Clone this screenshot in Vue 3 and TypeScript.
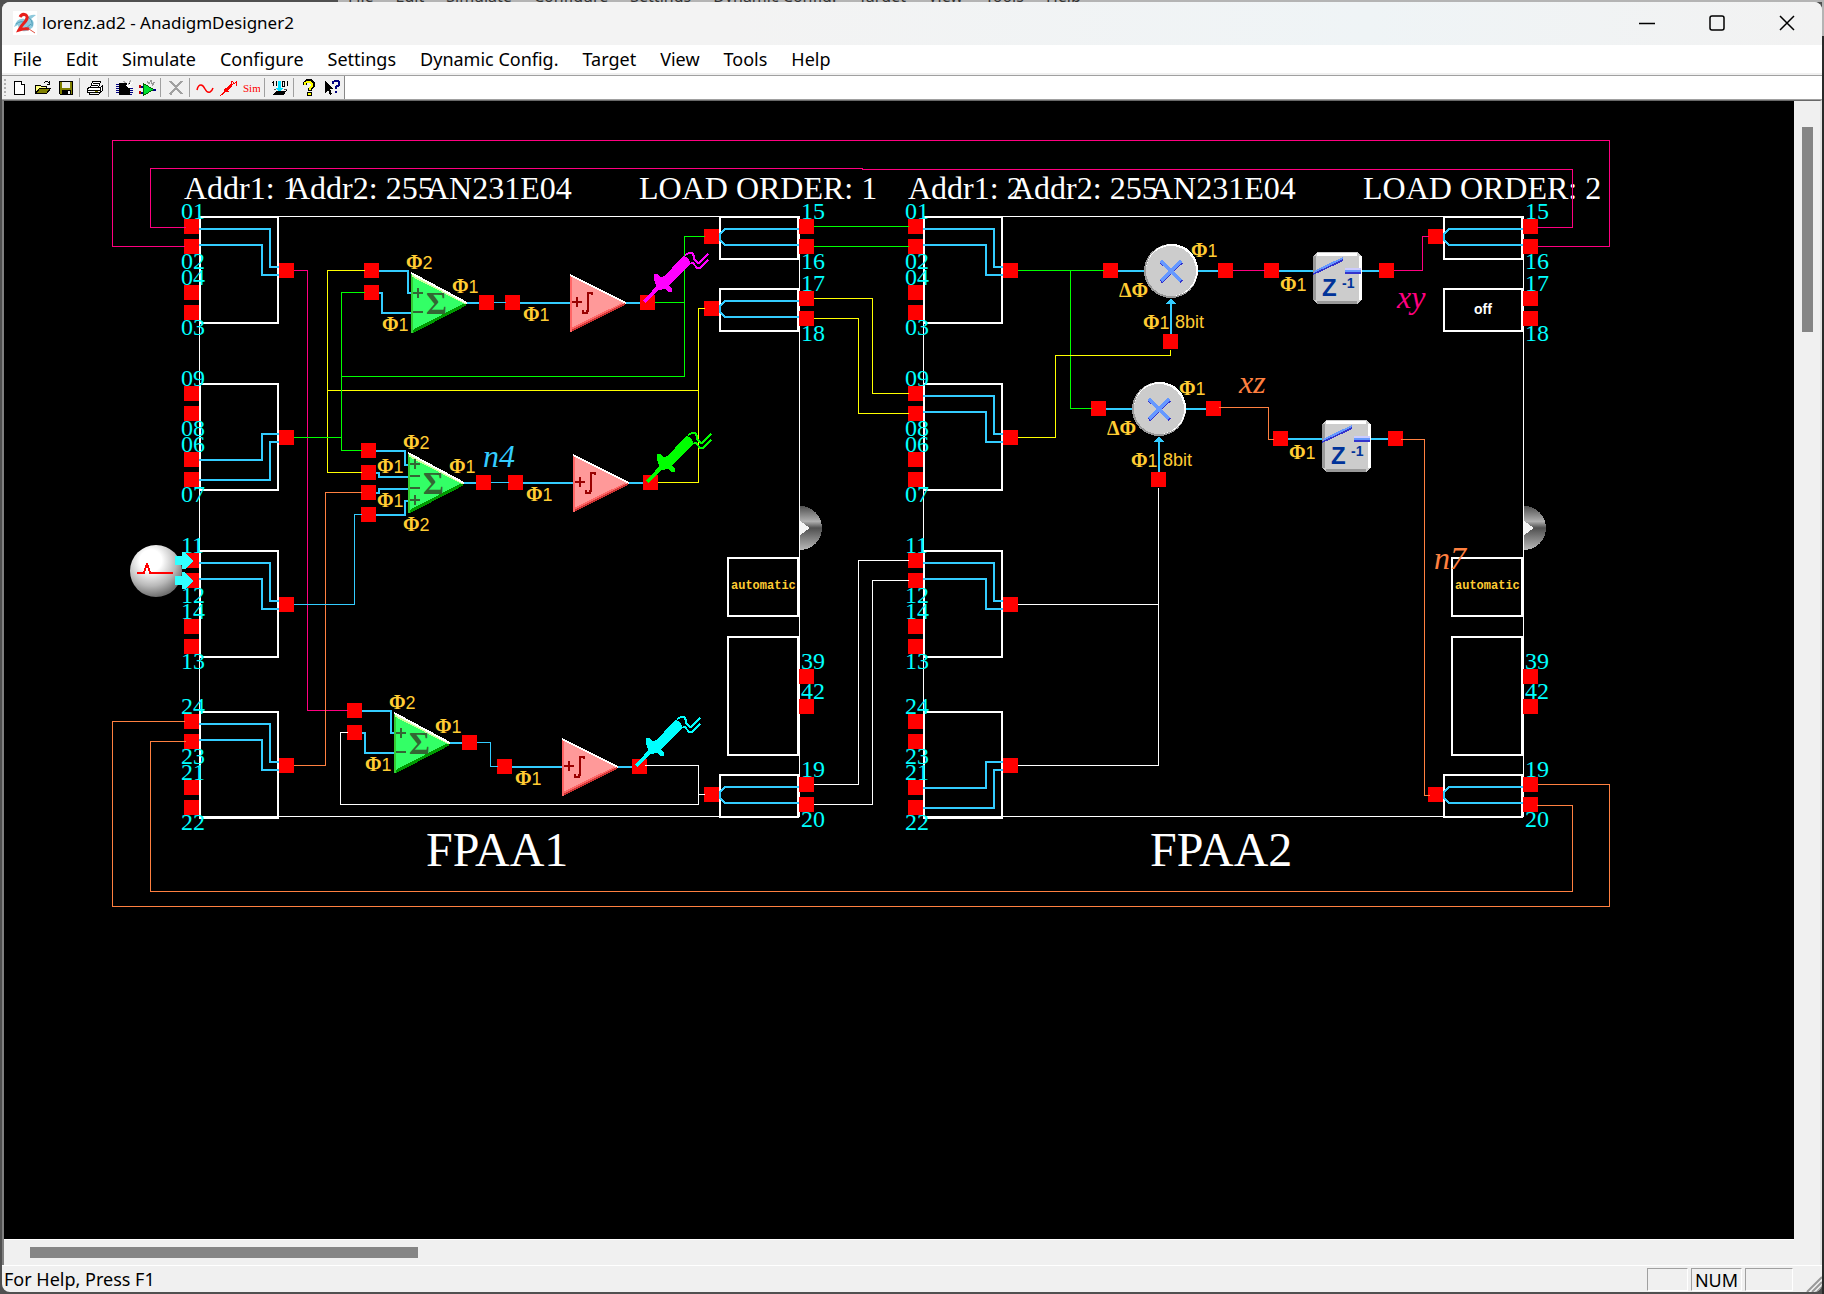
<script setup lang="ts">
type Point = { x: number; y: number }
type Label = Point & { text: string }
type Wire = { color: string; points: string }

const menus: string[] = ['File', 'Edit', 'Simulate', 'Configure', 'Settings', 'Dynamic Config.', 'Target', 'View', 'Tools', 'Help']

const toolGroups: string[][] = [
  ['New', 'Open', 'Save'],
  ['Print'],
  ['Insert chip', 'Insert CAM'],
  ['Delete'],
  ['Signal generator', 'Oscilloscope probe', 'Simulate'],
  ['Download'],
  ['About', 'Context help'],
]

const MAGENTA = '#ff0080'
const YELLOW = '#ffff00'
const GREEN = '#00ff00'
const ORANGE = '#ff8040'
const SKY = '#33ccff'
const WHITE = '#ffffff'

/* Chip geometry: both devices share one layout, shifted sideways. */
const chips = [
  { name: 'FPAA1', dx: 0, addr: '1', order: '1' },
  { name: 'FPAA2', dx: 724, addr: '2', order: '2' },
]

const inputCells = [
  { dy: 0, pins: ['01', '02', '04', '03'] },
  { dy: 167, pins: ['09', '08', '06', '07'] },
  { dy: 334, pins: ['11', '12', '14', '13'] },
  { dy: 495, pins: ['24', '23', '21', '22'] },
]
const pinTops: number[] = [219, 239, 285, 305]
const pinBaselines: number[] = [219, 269, 285, 335]

const outputCells = [
  { dy: 0, pins: ['15', '16'] },
  { dy: 72, pins: ['17', '18'] },
  { dy: 558, pins: ['19', '20'] },
]

/* Which pin pair each input cell is switched to. */
const lowerPair = (chip: number, cell: number): boolean =>
  (chip === 0 && cell === 1) || (chip === 1 && cell === 3)
const cellOff = (chip: number, cell: number): boolean => chip === 1 && cell === 1

const upperRoute = ['199,229 270,229 270,267 279,267', '199,245 262,245 262,275 279,275']
const lowerRoute = ['199,293 262,293 262,267 279,267', '199,313 270,313 270,275 279,275']

const summers: Point[] = [{ x: 0, y: 0 }, { x: -17, y: 440 }]
const integrators: (Point & { probe: string })[] = [
  { x: 0, y: 0, probe: '#ff00ff' },
  { x: 3, y: 180, probe: '#00ff00' },
  { x: -8, y: 464, probe: '#00ffff' },
]
const multipliers: Point[] = [{ x: 0, y: 0 }, { x: -12, y: 138 }]
const holds: Point[] = [{ x: 0, y: 0 }, { x: 9, y: 168 }]
const quadPins: number[] = [443, 465, 485, 507]
const quadPhases: Label[] = [
  { x: 403, y: 449, text: '2' },
  { x: 449, y: 473, text: '1' },
  { x: 377, y: 473, text: '1' },
  { x: 377, y: 507, text: '1' },
  { x: 403, y: 531, text: '2' },
]

const wires: Wire[] = [
  { color: MAGENTA, points: '184,246 112,246 112,140 1609,140 1609,246 1537,246' },
  { color: MAGENTA, points: '185,227 150,227 150,168 862,168 862,169 1572,169 1572,227 1536,227' },
  { color: MAGENTA, points: '293,270 307,270 307,710 347,710' },
  { color: YELLOW, points: '364,270 327,270 327,472 361,472' },
  { color: YELLOW, points: '327,390 698,390' },
  { color: YELLOW, points: '704,308 698,308 698,482 657,482' },
  { color: GREEN, points: '364,292 341,292 341,450 361,450' },
  { color: GREEN, points: '293,437 341,437' },
  { color: GREEN, points: '341,376 684,376 684,236 704,236' },
  { color: GREEN, points: '654,302 684,302' },
  { color: GREEN, points: '813,226 908,226' },
  { color: GREEN, points: '813,246 908,246' },
  { color: YELLOW, points: '813,298 872,298 872,393 908,393' },
  { color: YELLOW, points: '813,318 858,318 858,413 908,413' },
  { color: ORANGE, points: '361,492 325,492 325,765 293,765' },
  { color: SKY, points: '361,514 354,514 354,604 293,604' },
  { color: SKY, points: '493,302 505,302' },
  { color: SKY, points: '490,482 508,482' },
  { color: SKY, points: '476,742 490,742 490,766 497,766' },
  { color: WHITE, points: '347,732 340,732 340,804 698,804 698,765 644,765' },
  { color: WHITE, points: '698,794 704,794' },
  { color: WHITE, points: '813,784 858,784 858,560 908,560' },
  { color: WHITE, points: '813,804 872,804 872,580 908,580' },
  { color: ORANGE, points: '184,721 112,721 112,906 1609,906 1609,784 1537,784' },
  { color: ORANGE, points: '185,741 150,741 150,891 1572,891 1572,805 1536,805' },
  { color: GREEN, points: '1017,270 1103,270' },
  { color: GREEN, points: '1070,270 1070,408 1091,408' },
  { color: YELLOW, points: '1017,437 1055,437 1055,355 1170,355 1170,349' },
  { color: WHITE, points: '1017,604 1158,604' },
  { color: WHITE, points: '1158,487 1158,765 1017,765' },
  { color: MAGENTA, points: '1232,270 1264,270' },
  { color: MAGENTA, points: '1393,270 1422,270 1422,236 1428,236' },
  { color: ORANGE, points: '1218,407 1268,407 1268,439 1273,439' },
  { color: ORANGE, points: '1400,439 1424,439 1424,795 1429,795' },
]

const nets: (Label & { color: string })[] = [
  { text: 'n4', x: 483, y: 467, color: SKY },
  { text: 'xz', x: 1239, y: 393, color: ORANGE },
  { text: 'xy', x: 1397, y: 308, color: MAGENTA },
  { text: 'n7', x: 1434, y: 569, color: ORANGE },
]

const move = (p: Point): string => `translate(${p.x} ${p.y})`
</script>

<template>
  <div class="desktop">
    <div class="behind" aria-hidden="true">
      <span v-for="m in menus" :key="m">{{ m }}</span>
    </div>
    <main class="window">
      <header class="titlebar">
        <svg class="logo" viewBox="0 0 24 24" aria-hidden="true">
          <rect width="24" height="24" fill="#fff" />
          <path d="M1 16Q4 6 12 8Q17 3 23 4L18 8Q22 10 20 16Q15 21 9 20L12 16L6 18L5 14Z" fill="#8fc9dc" />
          <path d="M3 13Q8 9 13 12M15 6Q20 9 19 15M7 19Q14 18 18 13" fill="none" stroke="#4a9cb8" stroke-width="1" />
          <path d="M7 6Q9 2 13 4Q16 7 11 12Q8 15 6 19Q12 17 16 18" fill="none" stroke="#e8201c" stroke-width="3" />
          <path d="M16 18L22 22" stroke="#e05040" />
        </svg>
        <h1>lorenz.ad2 - AnadigmDesigner2</h1>
        <div class="window-buttons">
          <button type="button" aria-label="Minimize">
            <svg viewBox="0 0 16 16"><path d="M0 8.500H16" /></svg>
          </button>
          <button type="button" aria-label="Maximize">
            <svg viewBox="0 0 16 16"><rect x="1" y="1" width="14" height="14" rx="2" /></svg>
          </button>
          <button type="button" aria-label="Close">
            <svg viewBox="0 0 16 16"><path d="M1 1L15 15M15 1L1 15" /></svg>
          </button>
        </div>
      </header>

      <nav class="menubar">
        <button v-for="m in menus" :key="m" type="button">{{ m }}</button>
      </nav>

      <div class="toolbar-row">
        <div class="toolbar" role="toolbar" aria-label="Standard">
          <span class="grip"></span>
          <div v-for="(group, g) in toolGroups" :key="g" class="group">
            <button v-for="tool in group" :key="tool" type="button" :aria-label="tool">
              <svg viewBox="0 0 18 18" shape-rendering="crispEdges">
                <g v-if="tool === 'New'" fill="#fff" stroke="#000">
                  <path d="M3.500 2.500H10.500L13.500 5.500V15.500H3.500Z" />
                  <path d="M10.500 2.500V5.500H13.500" />
                </g>
                <g v-else-if="tool === 'Open'">
                  <path d="M1.500 14.500V6.500H6.500L7.500 7.500H12.500V9.500" fill="#ffff80" stroke="#000" />
                  <path d="M1.500 14.500L5.500 9.500H16.500L12.500 14.500Z" fill="#808000" stroke="#000" />
                  <path d="M9.500 4.500L11.500 2.500H13.500L15.500 4.500V2M15.500 5.500H12.500" fill="none" stroke="#000" />
                </g>
                <g v-else-if="tool === 'Save'">
                  <path d="M2.500 2.500H15.500V15.500H3.500L2.500 14.500Z" fill="#808000" stroke="#000" />
                  <rect x="5" y="3" width="8" height="6" fill="#f0f0f0" />
                  <rect x="5" y="11" width="9" height="5" fill="#000" />
                  <rect x="11" y="12" width="2" height="3" fill="#f0f0f0" />
                </g>
                <g v-else-if="tool === 'Print'" stroke="#000" fill="#fff">
                  <path d="M6.500 2.500H14.500L12.500 8.500H4.500ZM7 4.500H13M6 6.500H12" />
                  <path d="M2.500 8.500H14.500V13.500H1.500V10.500ZM14.500 8.500L16.500 6.500V11.500L14.500 13.500" />
                  <path d="M3.500 13.500V15.500H12.500L14.500 13.500M2 11.500H14" fill="none" />
                  <path d="M9 12.500H12" stroke="#808000" />
                </g>
                <g v-else-if="tool === 'Insert chip'">
                  <rect x="4" y="4" width="11" height="12" fill="#000" />
                  <path d="M1 5.500H4M1 9.500H4M1 13.500H4M15 9.500H18M15 13.500H18M1 7.500H4M1 11.500H4M15 11.500H18M15 15.500H17" stroke="#000080" />
                  <path d="M9 5L11 7L14 1L14 5L18 3L15 7L17 9H13Z" fill="#fff" />
                  <path d="M8 2L11 4M16 1L13 6" stroke="#aaa" />
                </g>
                <g v-else-if="tool === 'Insert CAM'">
                  <path d="M5.500 4.500L15.500 10.500L5.500 16.500Z" fill="#00e030" stroke="#006600" />
                  <path d="M1 7.500H5M1 13.500H5M15 10.500H18" stroke="#000080" stroke-width="2" />
                  <rect x="1" y="6" width="2" height="3" fill="#c00" />
                  <rect x="1" y="12" width="2" height="3" fill="#c00" />
                  <path d="M9 2L11 5L13 1V5L17 3L14 7" fill="none" stroke="#999" />
                </g>
                <path v-else-if="tool === 'Delete'" d="M3 2L15 15M15 2L3 15M3 15H5" fill="none" stroke="#a0a0a0" stroke-width="2" />
                <path v-else-if="tool === 'Signal generator'" d="M1 11Q2 6 5 6Q7 6 9 10Q11 14 14 13Q16 12 17 9" fill="none" stroke="#f00" stroke-width="1.500" shape-rendering="auto" />
                <g v-else-if="tool === 'Oscilloscope probe'">
                  <path d="M5 13L5 10L7 9L12 4L14 5L13 7L9 11L10 13L8 13Z" fill="#f00" />
                  <path d="M7 12L1 17M12 4Q13 1 14 3L15 5L17 3V7" fill="none" stroke="#f00" />
                </g>
                <text v-else-if="tool === 'Simulate'" class="sim" x="1" y="13">Sim</text>
                <g v-else-if="tool === 'Download'">
                  <path d="M2.500 2V7M5.500 2V7M13.500 2H11.500V7H13.500ZM16.500 2V7M1 3.500H3" fill="none" stroke="#000" />
                  <path d="M7 2H10V9H12L8 13L4 9H7Z" fill="#00e0ff" />
                  <path d="M2 16L5 12H14L16 11L13 16Z" fill="#000" />
                  <path d="M3 10.500H5M13 10.500H16" stroke="#555" />
                </g>
                <g v-else-if="tool === 'About'">
                  <path d="M5 6V4L7 2H11L13 4V7L10 10V12" fill="none" stroke="#000" stroke-width="4" />
                  <path d="M5 6V4L7 3H10L12 5V7L10 9V11" fill="none" stroke="#ffff00" stroke-width="2" />
                  <rect x="7" y="13" width="5" height="4" fill="#000" />
                  <rect x="8" y="14" width="3" height="2" fill="#ffff00" />
                </g>
                <g v-else>
                  <path d="M2 2V14L5 11L7 16L9 15L7 10H11Z" fill="#000" />
                  <path d="M10 5V3L12 2H15L16 3V6L13 8V10M13 12V14" fill="none" stroke="#000080" stroke-width="2" />
                </g>
              </svg>
            </button>
          </div>
        </div>
      </div>

      <section class="workspace">
        <div class="canvas">
          <svg class="diagram" role="img" aria-label="Lorenz circuit schematic" shape-rendering="crispEdges">
            <defs>
              <radialGradient id="ball" cx="0.400" cy="0.300" r="0.700">
                <stop offset="0.300" stop-color="#ffffff" />
                <stop offset="0.700" stop-color="#b8b8b8" />
                <stop offset="1" stop-color="#707070" />
              </radialGradient>
              <linearGradient id="knob" x1="0" y1="0" x2="0" y2="1">
                <stop offset="0" stop-color="#505050" />
                <stop offset="0.350" stop-color="#b0b0b0" />
                <stop offset="0.500" stop-color="#505050" />
                <stop offset="1" stop-color="#b8b8b8" />
              </linearGradient>
            </defs>
            <g transform="translate(-4 -101)">
              <!-- devices -->
              <g v-for="(chip, c) in chips" :key="chip.name" :transform="`translate(${chip.dx} 0)`">
                <path d="M800 506A22 22 0 0 1 800 550Z" fill="url(#knob)" />
                <path d="M800 521L810 528L800 535Z" fill="#f4f4f4" />
                <g class="heading">
                  <text x="184" y="199">Addr1: {{ chip.addr }}</text>
                  <text x="287" y="199">Addr2: 255</text>
                  <text x="426" y="199">AN231E04</text>
                  <text x="639" y="199">LOAD ORDER: {{ chip.order }}</text>
                </g>
                <text class="chip-name" x="426" y="866">{{ chip.name }}</text>
                <rect x="199.500" y="216.500" width="600" height="600" class="outline" />

                <g v-for="(cell, i) in inputCells" :key="cell.dy" :transform="`translate(0 ${cell.dy})`">
                  <rect x="200" y="217" width="78" height="106" class="cell" />
                  <polyline v-for="p in lowerPair(c, i) ? lowerRoute : upperRoute" :key="p" :points="p" class="lead" />
                  <rect v-for="y in pinTops" :key="y" x="184" :y="y" width="15" height="15" class="pin" />
                  <rect x="279" y="263" width="15" height="15" class="pin" />
                  <text v-for="(n, k) in cell.pins" :key="n" x="181" :y="pinBaselines[k]" class="pin-no">{{ n }}</text>
                </g>

                <g v-for="(cell, i) in outputCells" :key="cell.dy" :transform="`translate(0 ${cell.dy})`">
                  <rect x="720" y="217" width="78" height="42" class="cell" />
                  <template v-if="!cellOff(c, i)">
                    <path d="M799 229H725L720 234V240L725 245H799" class="lead" />
                    <rect x="704" y="229" width="15" height="15" class="pin" />
                  </template>
                  <text v-else x="750" y="242" class="off">off</text>
                  <rect x="799" y="219" width="15" height="15" class="pin" />
                  <rect x="799" y="239" width="15" height="15" class="pin" />
                  <text x="801" y="219" class="pin-no">{{ cell.pins[0] }}</text>
                  <text x="801" y="269" class="pin-no">{{ cell.pins[1] }}</text>
                </g>

                <rect x="728" y="558" width="70" height="58" class="cell" />
                <text x="731" y="589" class="auto">automatic</text>
                <rect x="728" y="637" width="70" height="118" class="cell" />
                <rect x="799" y="669" width="15" height="15" class="pin" />
                <rect x="799" y="699" width="15" height="15" class="pin" />
                <text x="801" y="669" class="pin-no">39</text>
                <text x="801" y="699" class="pin-no">42</text>
              </g>

              <!-- two-input summing stages -->
              <g v-for="s in summers" :key="s.y" :transform="move(s)">
                <path d="M379 271H408V293H412M379 293H382V313H412M466 303H479" class="lead" />
                <polygon points="411,273 466,303 411,333" fill="#33ff66" />
                <path d="M412 332L466 304" stroke="#009900" stroke-width="3" />
                <path d="M412 273V333" stroke="#33cc33" stroke-width="2" />
                <path d="M412 275L466 303" stroke="#ccff99" stroke-width="3" />
                <path d="M411 273L467 303" stroke="#fff" stroke-width="2" />
                <path d="M413 293H423M418 288V298M413 312H423" stroke="#336633" stroke-width="2" />
                <text x="426" y="314" class="sigma">Σ</text>
                <rect x="364" y="263" width="15" height="15" class="pin" />
                <rect x="364" y="285" width="15" height="15" class="pin" />
                <rect x="479" y="295" width="15" height="15" class="pin" />
                <text x="406" y="269" class="phase">Φ<tspan class="digit">2</tspan></text>
                <text x="452" y="293" class="phase">Φ<tspan class="digit">1</tspan></text>
                <text x="382" y="331" class="phase">Φ<tspan class="digit">1</tspan></text>
              </g>

              <!-- four-input summing stage -->
              <g>
                <path d="M376 451H405V465H409M376 473H379V477H409M376 493H379V489H409M376 515H405V501H409M463 483H476" class="lead" />
                <polygon points="408,453 463,483 408,513" fill="#33ff66" />
                <path d="M409 512L463 484" stroke="#009900" stroke-width="3" />
                <path d="M409 453V513" stroke="#33cc33" stroke-width="2" />
                <path d="M409 455L463 483" stroke="#ccff99" stroke-width="3" />
                <path d="M408 453L464 483" stroke="#fff" stroke-width="2" />
                <path d="M410 464H420M415 459V469M410 476H420M410 488H420M410 500H420M415 495V505" stroke="#336633" stroke-width="2" />
                <text x="423" y="494" class="sigma">Σ</text>
                <rect v-for="y in quadPins" :key="y" x="361" :y="y" width="15" height="15" class="pin" />
                <rect x="476" y="475" width="15" height="15" class="pin" />
                <text v-for="(p, i) in quadPhases" :key="i" :x="p.x" :y="p.y" class="phase">Φ<tspan class="digit">{{ p.text }}</tspan></text>
              </g>

              <!-- integrators -->
              <g v-for="s in integrators" :key="s.y" :transform="move(s)">
                <path d="M520 303H571M625 303H640" class="lead" />
                <polygon points="570,274 626,303 570,332" fill="#ff9999" />
                <path d="M571 329L622 304" stroke="#ff6666" stroke-width="2" />
                <path d="M571 331L625 304" stroke="#cc3333" stroke-width="2" />
                <path d="M571 275V332" stroke="#ff6666" stroke-width="2" />
                <path d="M570 275L626 303" stroke="#fff" stroke-width="2" />
                <path d="M572 302H582M577 297V307" stroke="#990000" stroke-width="2" />
                <path d="M592 295V293H588V311H587V313H583V310" fill="none" stroke="#990000" stroke-width="2" />
                <rect x="505" y="295" width="15" height="15" class="pin" />
                <rect x="640" y="295" width="15" height="15" class="pin" />
                <text x="523" y="321" class="phase">Φ<tspan class="digit">1</tspan></text>
              </g>

              <!-- multipliers -->
              <g v-for="s in multipliers" :key="s.y" :transform="move(s)">
                <path d="M1118 271H1145M1197 271H1218M1171 302V334" class="lead" />
                <path d="M1171 298L1176 304H1166Z" fill="#33ccff" />
                <circle cx="1171" cy="271" r="27" fill="#999999" />
                <circle cx="1172" cy="270" r="26" fill="#ffffff" />
                <circle cx="1171" cy="271" r="25" fill="#cccccc" />
                <path d="M1161 262L1182 282M1161 282L1182 262" stroke="#3333cc" stroke-width="3" />
                <path d="M1161 261L1181 281M1161 281L1181 261" stroke="#6699ff" stroke-width="3" />
                <rect x="1103" y="263" width="15" height="15" class="pin" />
                <rect x="1218" y="263" width="15" height="15" class="pin" />
                <rect x="1163" y="334" width="15" height="15" class="pin" />
                <text x="1191" y="257" class="phase">Φ<tspan class="digit">1</tspan></text>
                <text x="1119" y="297" class="phase">ΔΦ</text>
                <text x="1143" y="329" class="phase">Φ<tspan class="digit">1</tspan></text>
                <text x="1175" y="328" class="bits">8bit</text>
              </g>

              <!-- sample and hold delays -->
              <g v-for="s in holds" :key="s.y" :transform="move(s)">
                <path d="M1279 271H1313M1361 271H1379" class="lead" />
                <path d="M1317 252H1357L1361 256V300L1357 304H1317L1313 300V256Z" fill="#cccccc" />
                <path d="M1317 254H1357M1360 256V300" stroke="#fff" stroke-width="3" />
                <path d="M1314 256V300M1317 302H1357" stroke="#999" stroke-width="3" />
                <path d="M1313 274L1343 260" stroke="#3333cc" stroke-width="2" />
                <path d="M1314 272L1343 258" stroke="#6699ff" stroke-width="2" />
                <path d="M1345 269H1361" stroke="#ccccff" stroke-width="2" />
                <path d="M1345 271H1361" stroke="#6699ff" stroke-width="2" />
                <path d="M1345 273H1361" stroke="#3333cc" stroke-width="2" />
                <text x="1322" y="296" class="z">Z</text>
                <text x="1342" y="288" class="power">-1</text>
                <rect x="1264" y="263" width="15" height="15" class="pin" />
                <rect x="1379" y="263" width="15" height="15" class="pin" />
                <text x="1280" y="291" class="phase">Φ<tspan class="digit">1</tspan></text>
              </g>

              <!-- routing -->
              <g transform="translate(0.500 0.500)">
                <polyline v-for="w in wires" :key="w.points" :points="w.points" :stroke="w.color" fill="none" />
              </g>

              <!-- oscilloscope probes -->
              <g v-for="s in integrators" :key="s.probe" :transform="move({ x: s.x + 645, y: s.y + 301 })" :fill="s.probe" :stroke="s.probe">
                <path d="M-1 0L11 -15L9 -22V-27H13L15 -24L20 -25L35 -42L39 -45L43 -43L46 -37L25 -17L24 -15L27 -13V-9H23L21 -12L13 -11L2 1Z" stroke="none" />
                <path d="M-1 1L13 -13" stroke-width="3" />
                <path d="M40 -46L44 -48H47L49 -45V-42L53 -38H54L63 -47M46 -38H48L52 -33H55L63 -41" fill="none" stroke-width="2" />
              </g>

              <!-- signal source -->
              <circle cx="156" cy="571" r="26" fill="url(#ball)" shape-rendering="auto" />
              <path d="M137 573H144L146 566H148L150 573H173M147 563V567" fill="none" stroke="#f00" stroke-width="2" />
              <path d="M175 556H182V552H185L193 561L185 569H182V565H175ZM175 576H182V572H185L193 581L185 589H182V585H175Z" fill="#33ffff" />

              <text v-for="n in nets" :key="n.text" :x="n.x" :y="n.y" :fill="n.color" class="net">{{ n.text }}</text>
            </g>
          </svg>
        </div>
        <div class="vscroll" role="scrollbar" aria-label="Vertical" aria-orientation="vertical" aria-valuenow="0"><span></span></div>
        <div class="hscroll" role="scrollbar" aria-label="Horizontal" aria-orientation="horizontal" aria-valuenow="0"><span></span></div>
      </section>

      <footer class="status">
        <p>For Help, Press F1</p>
        <span class="pane caps"></span>
        <span class="pane num">NUM</span>
        <span class="pane scrl"></span>
        <svg class="size-grip" viewBox="0 0 16 16" aria-hidden="true">
          <path d="M1 16L16 1M6 16L16 6M11 16L16 11" stroke="#999" stroke-width="2" />
        </svg>
      </footer>
    </main>
  </div>
</template>

<style>
body {
  margin: 0;
}
</style>

<style scoped>
.desktop {
  box-sizing: border-box;
  display: flex;
  flex-direction: column;
  height: 100vh;
  padding: 0 2px 2px;
  background: linear-gradient(#b4b4b4 36px, #2a2a2a 36px) right / 2px 100% no-repeat, #505050;
  font-family: "Noto Sans", "Open Sans", sans-serif;
  color: #000;
}
.behind {
  display: flex;
  flex: none;
  gap: 22px;
  align-items: flex-end;
  height: 2px;
  margin-left: 336px;
  padding-left: 10px;
  overflow: hidden;
  background: #b4b4b4;
  color: #333;
  font-size: 16px;
  line-height: 12px;
  white-space: nowrap;
}
.window {
  display: flex;
  flex: 1;
  flex-direction: column;
  min-height: 0;
  overflow: hidden;
  border-radius: 8px;
  background: #f0f0f0;
}
button {
  margin: 0;
  padding: 0;
  border: 0;
  background: none;
  color: inherit;
  font: inherit;
}
.titlebar {
  box-sizing: border-box;
  display: flex;
  flex: none;
  align-items: center;
  height: 43px;
  padding: 0 0 2px 11px;
  background: linear-gradient(90deg, #f3f3f3 40%, #eff4f6 75%, #f2f2f2);
}
.logo {
  width: 24px;
  height: 24px;
}
h1 {
  flex: 1;
  margin: 0 0 0 5px;
  font-size: 17px;
  font-weight: 400;
  line-height: 24px;
}
.window-buttons {
  display: flex;
}
.window-buttons button {
  display: grid;
  place-items: center;
  width: 70px;
  height: 41px;
}
.window-buttons svg {
  width: 16px;
  height: 16px;
  fill: none;
  stroke: #000;
  stroke-width: 1.500;
}
.menubar {
  display: flex;
  flex: none;
  gap: 24px;
  align-items: center;
  height: 28px;
  padding-left: 11px;
  border-bottom: 2px solid #f0f0f0;
  background: #fff;
  font-size: 18px;
  line-height: 28px;
  white-space: nowrap;
}
.toolbar-row {
  display: flex;
  flex: none;
  height: 23px;
  border-top: 1px solid #a0a0a0;
  border-bottom: 1px solid #a0a0a0;
  background: #fff;
}
.toolbar {
  display: flex;
  padding-right: 1px;
  border-right: 1px solid #888;
  background: #f0f0f0;
}
.grip {
  width: 2px;
  margin: 3px 2px;
  background: repeating-linear-gradient(#b0b0b0 0 2px, #f0f0f0 2px 4px);
}
.group {
  display: flex;
}
.group + .group::before {
  width: 1px;
  margin: 2px 3px 2px 2px;
  background: #a0a0a0;
  content: "";
}
.group button {
  display: grid;
  place-items: center;
  width: 23px;
  height: 23px;
}
.group svg {
  width: 18px;
  height: 18px;
}
.sim {
  fill: #f00;
  font-family: "Liberation Serif", serif;
  font-size: 11px;
}
.workspace {
  display: grid;
  flex: 1;
  grid-template-rows: 1fr 26px;
  grid-template-columns: 1fr 26px;
  min-height: 0;
  border-top: 1px solid #696969;
  border-right: 2px solid #e3e3e3;
  border-left: 2px solid #808080;
}
.canvas {
  overflow: hidden;
  min-width: 0;
  min-height: 0;
  background: #000;
}
.diagram {
  display: block;
  width: 100%;
  height: 100%;
}
.vscroll {
  grid-row: 1 / 3;
  grid-column: 2;
  padding: 26px 7px 0 8px;
  background: #f0f0f0;
}
.vscroll span {
  display: block;
  height: 18%;
  background: #858585;
}
.hscroll {
  grid-row: 2;
  grid-column: 1;
  padding: 7px 0 0 26px;
  border-top: 1px solid #fff;
  background: #f0f0f0;
}
.hscroll span {
  display: block;
  width: 22%;
  height: 11px;
  background: #858585;
}
.status {
  display: flex;
  flex: none;
  gap: 3px;
  height: 26px;
  border-top: 1px solid #fff;
  font-size: 18px;
  line-height: 26px;
}
.status p {
  flex: 1;
  margin: 0 0 0 2px;
}
.pane {
  box-sizing: border-box;
  height: 23px;
  margin-top: 2px;
  border: 1px solid;
  border-color: #a0a0a0 #fff #fff #a0a0a0;
  line-height: 22px;
}
.caps {
  width: 41px;
}
.num {
  width: 51px;
  text-align: center;
}
.scrl {
  width: 48px;
}
.size-grip {
  align-self: flex-end;
  width: 16px;
  height: 16px;
  margin-left: 10px;
}

.outline {
  fill: none;
  stroke: #fff;
}
.cell {
  fill: none;
  stroke: #fff;
  stroke-width: 2;
}
.lead {
  fill: none;
  stroke: #33ccff;
  stroke-width: 2;
}
.pin {
  fill: #ff0000;
}
.diagram text {
  font-family: "Liberation Serif", serif;
}
.heading {
  fill: #fff;
  font-size: 32px;
}
.chip-name {
  fill: #fff;
  font-size: 48px;
}
.pin-no {
  fill: #00ffff;
  font-size: 24px;
}
.net {
  font-size: 32px;
  font-style: italic;
}
.sigma {
  fill: #336633;
  font-size: 32px;
  font-weight: 700;
}
.phase {
  fill: #ffcc33;
  font-size: 20px;
  font-weight: 700;
}
.digit {
  font-family: "Liberation Sans", sans-serif;
  font-size: 18px;
  font-weight: 400;
}
.diagram .bits {
  fill: #ffcc33;
  font-family: "Liberation Sans", sans-serif;
  font-size: 18px;
}
.diagram .off {
  fill: #fff;
  font-family: "Liberation Sans", sans-serif;
  font-size: 14px;
  font-weight: 700;
}
.diagram .auto {
  fill: #ffcc33;
  font-family: "Liberation Mono", monospace;
  font-size: 12px;
  font-weight: 700;
}
.diagram .z {
  fill: #003399;
  font-family: "Liberation Sans", sans-serif;
  font-size: 24px;
  font-weight: 700;
}
.diagram .power {
  fill: #003399;
  font-family: "Liberation Sans", sans-serif;
  font-size: 14px;
  font-weight: 700;
}
</style>
